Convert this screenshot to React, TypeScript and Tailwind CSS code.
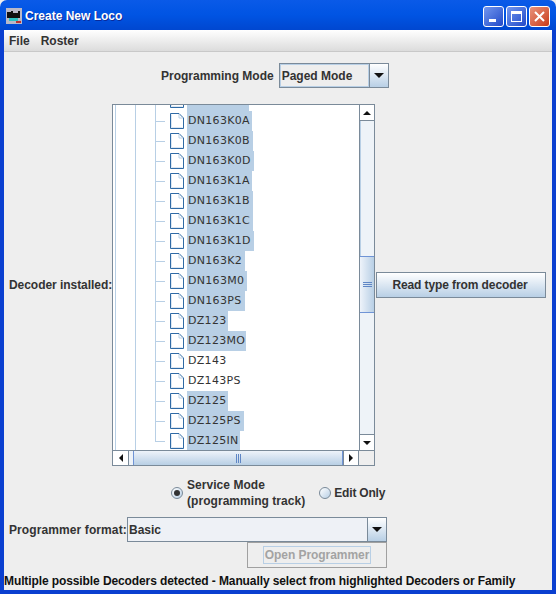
const ui = { fontFamily: '"Liberation Sans", Arial, sans-serif' };

const rows: [string, number][] = [
  ['DN163K0A', 65],
  ['DN163K0B', 66],
  ['DN163K0D', 67],
  ['DN163K1A', 65],
  ['DN163K1B', 66],
  ['DN163K1C', 66],
  ['DN163K1D', 67],
  ['DN163K2', 58],
  ['DN163M0', 60],
  ['DN163PS', 58],
  ['DZ123', 41],
  ['DZ123MO', 59],
  ['DZ143', 0],
  ['DZ143PS', 0],
  ['DZ125', 41],
  ['DZ125PS', 57],
  ['DZ125IN', 53],
];

function FileIcon() {
  return (
    <svg width="14" height="16" viewBox="0 0 14 16" className="shrink-0">
      <path d="M.5.5H9L13.5 5V15.5H.5Z" fill="#fff" stroke="#2f6aa5" />
      <path d="M9 1V5H13" fill="none" stroke="#b8cfe5" />
      <path d="M1.5 1.5V14.5H12.5" fill="none" stroke="#dce7f3" />
    </svg>
  );
}

function Arrow({ dir, big }: { dir: 'up' | 'down' | 'left' | 'right'; big?: boolean }) {
  if (big) {
    return (
      <svg width="10" height="5" viewBox="0 0 10 5">
        <path d="M0 0H10L5 5Z" fill="#111" />
      </svg>
    );
  }
  const d = { up: 'M0 4L4 0L8 4Z', down: 'M0 0H8L4 4Z', left: 'M4 0V8L0 4Z', right: 'M0 0V8L4 4Z' }[dir];
  const wide = dir === 'up' || dir === 'down';
  return (
    <svg width={wide ? 8 : 4} height={wide ? 4 : 8} viewBox={wide ? '0 0 8 4' : '0 0 4 8'}>
      <path d={d} fill="#111" />
    </svg>
  );
}

function TreeRow({ name, sel, last }: { name: string; sel: number; last?: boolean }) {
  return (
    <div className="h-5 flex items-center relative">
      <div className="absolute left-[42px] top-0 w-px bg-[#b8cfe5]" style={{ height: last ? 11 : 20 }} />
      <div className="absolute left-[42px] top-[10px] w-[10px] h-px bg-[#b8cfe5]" />
      <div className="ml-[57px]"><FileIcon /></div>
      <div className="relative ml-[3px] h-5 flex items-center">
        {sel > 0 && <div className="absolute left-0 top-0 h-5 bg-[#b8cfe5]" style={{ width: sel }} />}
        <span className="relative ml-[1px] text-[11px] text-[#333] tracking-[0.3px] font-['DejaVu_Sans',sans-serif]">
          {name}
        </span>
      </div>
    </div>
  );
}

function TitleButton({ kind }: { kind: 'min' | 'max' | 'close' }) {
  const bg = kind === 'close'
    ? 'bg-gradient-to-br from-[#e8917a] to-[#c8380f]'
    : 'bg-gradient-to-br from-[#7396ee] to-[#2348c8]';
  return (
    <div className={`w-[21px] h-[21px] rounded-[3px] border border-white ${bg} flex items-center justify-center`}>
      {kind === 'min' && <div className="w-[7px] h-[3px] bg-white mt-[8px] mr-[3px]" />}
      {kind === 'max' && <div className="w-[11px] h-[11px] border border-white border-t-[3px]" />}
      {kind === 'close' && (
        <svg width="11" height="11" viewBox="0 0 11 11">
          <path d="M1 1L10 10M10 1L1 10" stroke="#fff" strokeWidth="2" />
        </svg>
      )}
    </div>
  );
}

export default function App() {
  return (
    <div style={ui} className="w-[556px] h-[594px] relative overflow-hidden bg-[#eeeeee] text-[#333] flex flex-col">
      {/* title bar */}
      <div className="h-[30px] shrink-0 rounded-t-[7px] bg-gradient-to-b from-[#0a5ae8] via-[#0054e3] to-[#0047d0] flex items-center pt-[2px] pl-[6px] pr-[6px]">
        <svg width="16" height="16" viewBox="0 0 16 16" className="shrink-0">
          <rect width="16" height="16" fill="#b9b9c8" />
          <path d="M1 4H5V3H7V5H12V3H14V10H1Z" fill="#111" />
          <rect x="3" y="10" width="9" height="3" fill="#2cc4c4" />
          <rect x="10" y="13" width="5" height="2" fill="#b33" />
        </svg>
        <span className="ml-[3px] text-white font-bold text-[12px] [text-shadow:1px_1px_0_#0a2a9a]">Create New Loco</span>
        <div className="ml-auto flex gap-[2px]">
          <TitleButton kind="min" />
          <TitleButton kind="max" />
          <TitleButton kind="close" />
        </div>
      </div>

      <div className="flex-1 flex flex-col border-x-[4px] border-b-[4px] border-[#0a3fd0] min-h-0">
        {/* menu */}
        <div className="h-[22px] shrink-0 bg-gradient-to-b from-white to-[#dcdcdc] border-b border-[#c8c8c8] flex items-center pl-[5px] gap-[11px] text-[12px] font-bold">
          <span>File</span>
          <span>Roster</span>
        </div>

        <div className="flex-1 flex flex-col min-h-0">
          <div className="h-[25px] mt-[11px] shrink-0 flex items-center">
            <span className="ml-[157px] text-[12px] font-bold">Programming Mode</span>
            <div className="ml-[5px] w-[110px] h-[25px] border border-[#7a8a99] bg-[#eeeeee] flex">
              <div className="flex-1 flex items-center pl-[1px] text-[12px] font-bold border border-[#b8cfe5]">Paged Mode</div>
              <div className="w-[19px] border-l border-[#7a8a99] bg-gradient-to-b from-white to-[#b8cfe5] flex items-center justify-center"><Arrow dir="down" big /></div>
            </div>
          </div>

          {/* decoder row */}
          <div className="mt-[16px] flex items-center h-[362px] shrink-0">
            <span className="ml-[5px] w-[103px] shrink-0 text-[12px] font-bold whitespace-nowrap tracking-[-0.05px]">Decoder installed:</span>
            <div className="w-[263px] h-[362px] border border-[#7a8a99] bg-white flex flex-col shrink-0">
              <div className="flex flex-1 min-h-0">
                <div className="flex-1 relative overflow-hidden">
                  <div className="absolute left-[2px] top-0 bottom-0 w-px bg-[#b8cfe5]" />
                  <div className="absolute left-[22px] top-0 bottom-0 w-px bg-[#b8cfe5]" />
                  <div className="absolute left-[42px] top-0 h-[6px] w-px bg-[#b8cfe5]" />
                  <div className="absolute left-[57px] top-[-13px]"><FileIcon /></div>
                  <div className="absolute left-[74px] top-0 h-[6px] w-[62px] bg-[#b8cfe5]" />
                  <div className="mt-[6px]">
                    {rows.map(([n, s], i) => (
                      <TreeRow key={n} name={n} sel={s} last={i === rows.length - 1} />
                    ))}
                  </div>
                </div>
                <div className="w-[15px] border-l border-[#7a8a99] bg-[#eef3f8] flex flex-col shrink-0">
                  <div className="h-[16px] bg-white border-b border-[#7a8a99] flex items-center justify-center"><Arrow dir="up" /></div>
                  <div className="h-[135px] border-l border-[#b8cfe5]" />
                  <div className="h-[57px] border-y border-[#6f94d6] bg-gradient-to-r from-[#eef3fa] to-[#b8cfe5] flex flex-col items-center justify-center gap-px">
                    <div className="w-[9px] h-px bg-[#5f86c5]" />
                    <div className="w-[9px] h-px bg-[#5f86c5]" />
                    <div className="w-[9px] h-px bg-[#5f86c5]" />
                  </div>
                  <div className="flex-1" />
                  <div className="h-[16px] bg-white border-t border-[#7a8a99] flex items-center justify-center"><Arrow dir="down" /></div>
                </div>
              </div>
              <div className="h-[15px] shrink-0 border-t border-[#7a8a99] flex bg-[#eef3f8]">
                <div className="w-[16px] bg-white border-r border-[#7a8a99] flex items-center justify-center"><Arrow dir="left" /></div>
                <div className="w-[4px]" />
                <div className="w-[210px] border-x border-[#6f94d6] bg-gradient-to-b from-[#eef3fa] to-[#b8cfe5] flex items-center justify-center gap-px">
                  <div className="w-px h-[9px] bg-[#5f86c5]" />
                  <div className="w-px h-[9px] bg-[#5f86c5]" />
                  <div className="w-px h-[9px] bg-[#5f86c5]" />
                </div>
                <div className="w-[16px] bg-white border-x border-[#7a8a99] flex items-center justify-center"><Arrow dir="right" /></div>
                <div className="flex-1 bg-[#eeeeee]" />
              </div>
            </div>
            <button className="ml-[1px] w-[170px] h-[26px] border border-[#7a8a99] bg-gradient-to-b from-white to-[#b8cfe5] pr-[2px] text-[12px] font-bold text-[#333] tracking-[-0.1px]">
              Read type from decoder
            </button>
          </div>

          {/* radios */}
          <div className="mt-[11px] h-[32px] shrink-0 flex items-center">
            <div className="ml-[167px] w-[12px] h-[12px] rounded-full border border-[#7a8a99] bg-gradient-to-br from-white to-[#b8cfe5] flex items-center justify-center">
              <div className="w-[6px] h-[6px] rounded-full bg-[#333]" />
            </div>
            <div className="ml-[4px] text-[12px] font-bold leading-[16px] tracking-[0.05px]">Service Mode<br />(programming track)</div>
            <div className="ml-[14px] w-[12px] h-[12px] rounded-full border border-[#7a8a99] bg-gradient-to-br from-white to-[#b8cfe5]" />
            <span className="ml-[3px] text-[12px] font-bold tracking-[-0.2px]">Edit Only</span>
          </div>

          {/* format */}
          <div className="mt-[8px] h-[25px] shrink-0 flex items-center">
            <span className="ml-[5px] w-[118px] text-[12px] font-bold whitespace-nowrap tracking-[0.1px]">Programmer format:</span>
            <div className="w-[260px] h-[25px] border border-[#7a8a99] bg-[#eef1f6] flex">
              <div className="flex-1 flex items-center pl-[1px] text-[12px] font-bold">Basic</div>
              <div className="w-[19px] border-l border-[#7a8a99] bg-gradient-to-b from-white to-[#b8cfe5] flex items-center justify-center"><Arrow dir="down" big /></div>
            </div>
          </div>
          <button className="ml-[243px] w-[140px] h-[26px] border border-[#a0a0a0] flex items-center justify-center shrink-0">
            <span className="border border-[#b8cfe5] text-[12px] font-bold text-[#a3a3a3] px-px leading-[16px] tracking-[-0.05px]">Open Programmer</span>
          </button>
          <div className="mt-[6px] text-[12px] font-bold text-[#111] whitespace-nowrap leading-[14px] tracking-[-0.1px]">
            Multiple possible Decoders detected - Manually select from highlighted Decoders or Family
          </div>
        </div>
      </div>
    </div>
  );
}
